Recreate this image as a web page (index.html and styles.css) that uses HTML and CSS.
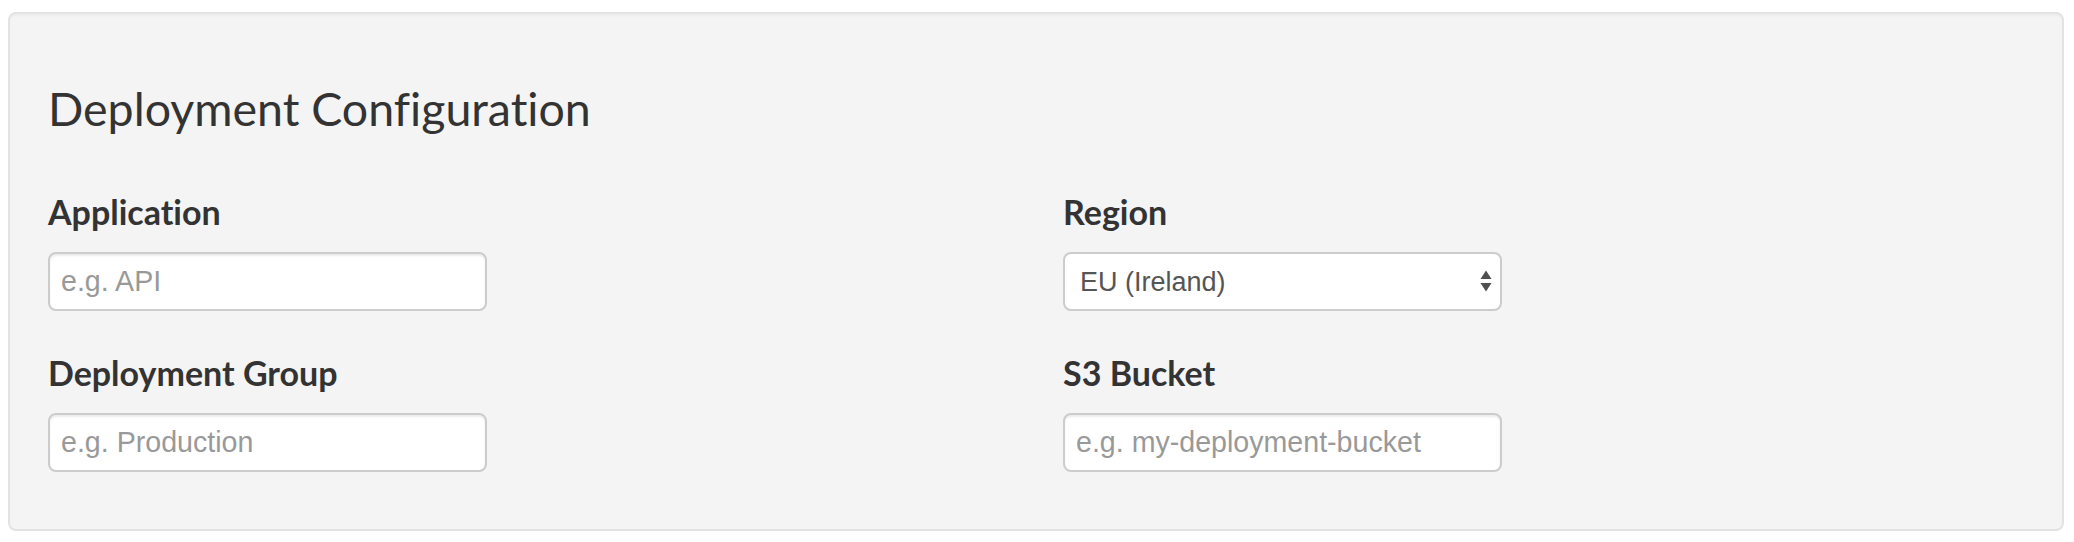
FILE: index.html
```html
<!DOCTYPE html>
<html lang="en">
<head>
<meta charset="utf-8">
<title>Deployment Configuration</title>
<link rel="stylesheet" href="styles.css">
</head>
<body>
  <section class="well">
    <h3 class="well-title">Deployment Configuration</h3>
    <div class="form-grid">
      <div class="form-group">
        <label class="field-label" for="app">Application</label>
        <input class="form-control" id="app" type="text" placeholder="e.g. API">
      </div>
      <div class="form-group">
        <label class="field-label" for="region">Region</label>
        <div class="select-wrap">
          <select class="form-control select-control" id="region">
            <option>EU (Ireland)</option>
            <option>US East (N. Virginia)</option>
            <option>US West (Oregon)</option>
          </select>
          <svg class="select-arrows" width="12" height="22" viewBox="0 0 12 22" aria-hidden="true">
            <polygon points="0.5,9 6,0.5 11.5,9" fill="#4f4f4f"/>
            <polygon points="0.5,13 11.5,13 6,21.5" fill="#4f4f4f"/>
          </svg>
        </div>
      </div>
      <div class="form-group">
        <label class="field-label" for="group">Deployment Group</label>
        <input class="form-control" id="group" type="text" placeholder="e.g. Production">
      </div>
      <div class="form-group">
        <label class="field-label" for="bucket">S3 Bucket</label>
        <input class="form-control" id="bucket" type="text" placeholder="e.g. my-deployment-bucket">
      </div>
    </div>
  </section>
</body>
</html>
```

FILE: styles.css
```css
html, body {
  margin: 0;
  padding: 0;
  background: #ffffff;
}

body {
  font-family: "Lato", "Open Sans", sans-serif;
  color: #333333;
  font-variant-ligatures: none;
}

.well {
  margin: 12px 10px 11px 8px;
  height: 519px;
  box-sizing: border-box;
  padding: 66px 38px 0 38px;
  background: #f4f4f4;
  border: 2px solid #e3e3e3;
  border-radius: 8px;
  box-shadow: inset 0 2px 2px rgba(0, 0, 0, 0.03);
}

.well-title {
  margin: 0;
  font-size: 46.5px;
  font-weight: 400;
  line-height: 57px;
  color: #333333;
  font-variant-ligatures: none;
}

.form-grid {
  display: grid;
  grid-template-columns: 1fr 1fr;
  column-gap: 54px;
  row-gap: 41px;
  margin-top: 54px;
}

.form-group {
  display: flex;
  flex-direction: column;
  align-items: flex-start;
}

.field-label {
  display: block;
  font-size: 34px;
  font-weight: 700;
  line-height: 41px;
  color: #333333;
  margin-bottom: 20px;
}

.form-control {
  box-sizing: border-box;
  width: 439px;
  height: 59px;
  margin: 0;
  padding: 0 12px 0 11px;
  font-family: "Liberation Sans", Arial, sans-serif;
  font-size: 28.6px;
  color: #555555;
  background: #ffffff;
  border: 2px solid #cccccc;
  border-radius: 8px;
  box-shadow: inset 0 2px 2px rgba(0, 0, 0, 0.075);
  outline: none;
}

.form-control::placeholder {
  color: #999999;
  opacity: 1;
}

.select-wrap {
  position: relative;
  width: 439px;
  height: 59px;
}

.select-control {
  -webkit-appearance: none;
  appearance: none;
  padding: 0 40px 0 15px;
  font-size: 27px;
  color: #555555;
  box-shadow: none;
}

.select-arrows {
  position: absolute;
  right: 10px;
  top: 18px;
  pointer-events: none;
}
```
